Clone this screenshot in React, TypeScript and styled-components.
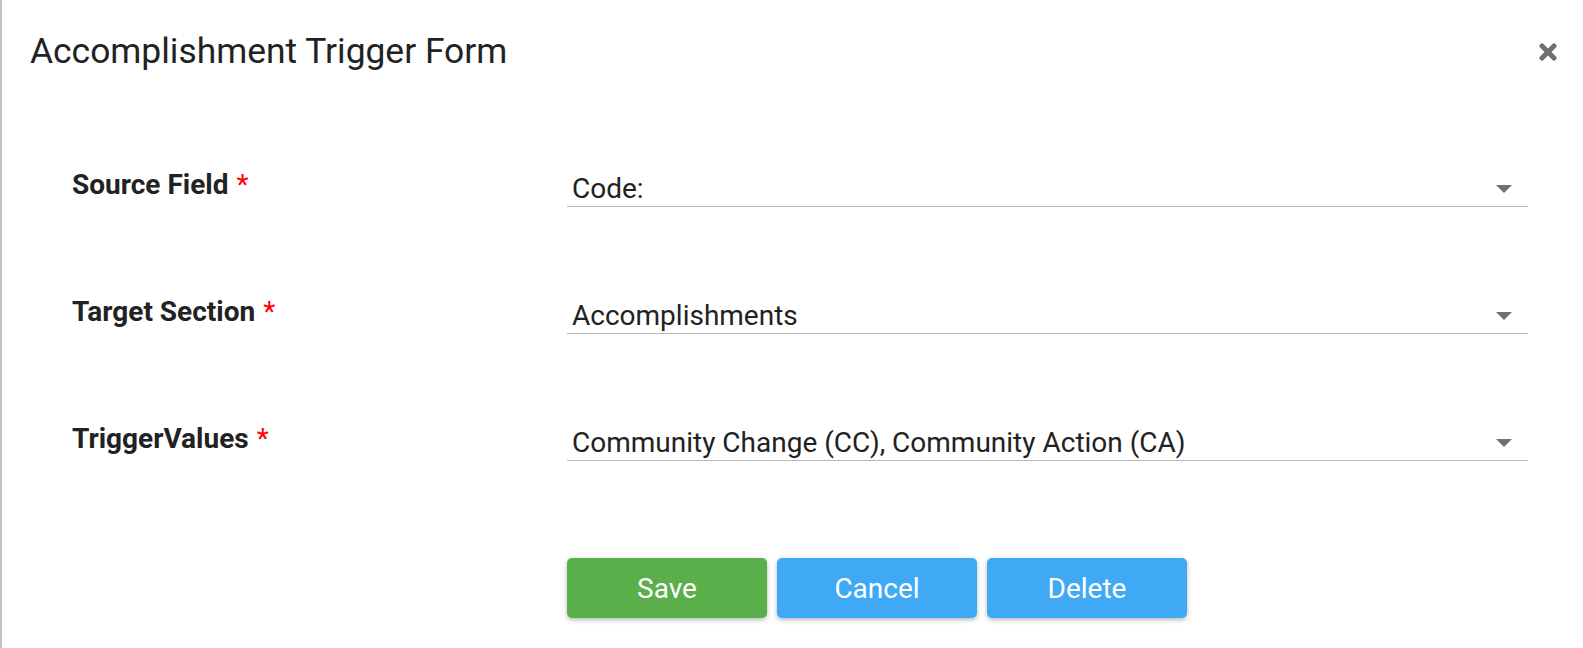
import React from "react";
import styled, { createGlobalStyle } from "styled-components";

const Global = createGlobalStyle`
  html, body { margin: 0; padding: 0; background: #ffffff; overflow: hidden; }
  body { font-family: Roboto, "Liberation Sans", Arial, sans-serif; }
  * { box-sizing: border-box; }
`;

const Modal = styled.div`
  width: 100%;
  height: 100vh;
  background: #ffffff;
  border-left: 2px solid #c4c4c4;
  display: flex;
  flex-direction: column;
`;

const Header = styled.div`
  display: flex;
  align-items: flex-start;
  justify-content: space-between;
  height: 141px;
  padding: 30px 26px 0 28px;
`;

const Title = styled.h1`
  margin: 0;
  font-family: Roboto, "Liberation Sans", sans-serif;
  font-weight: 400;
  font-size: 35.4px;
  line-height: 42px;
  color: #222222;
`;

const CloseButton = styled.button`
  margin-top: 13px;
  width: 18px;
  height: 18px;
  padding: 0;
  border: 0;
  background: transparent;
  display: flex;
  cursor: pointer;
`;

const Body = styled.div`
  display: flex;
  flex-direction: column;
  padding-left: 70px;
`;

const Row = styled.div`
  display: grid;
  grid-template-columns: 495px 961px;
  height: 127px;
  align-items: start;
`;

const Label = styled.label`
  margin-top: 28px;
  font-family: Roboto, "Liberation Sans", sans-serif;
  font-weight: 700;
  font-size: 28px;
  line-height: 32px;
  color: #222222;
`;

const Required = styled.span`
  color: #ff0000;
  font-weight: 400;
  margin-left: 8px;
`;

const Select = styled.div`
  margin-top: 32px;
  display: flex;
  align-items: center;
  justify-content: space-between;
  padding: 0 16px 1px 5px;
  border-bottom: 1.5px solid #b8b8b8;
  font-family: Roboto, "Liberation Sans", sans-serif;
  font-size: 28px;
  line-height: 32px;
  color: #222222;
`;

const Caret = styled.span`
  width: 0;
  height: 0;
  border-left: 8px solid transparent;
  border-right: 8px solid transparent;
  border-top: 8px solid #707070;
`;

const Actions = styled.div`
  display: grid;
  grid-template-columns: 495px auto;
  margin-top: 36px;
`;

const ButtonGroup = styled.div`
  display: flex;
  gap: 10px;
`;

const Button = styled.button<{ $variant: "save" | "info" }>`
  width: 200px;
  height: 60px;
  border: 0;
  border-radius: 5px;
  background: ${(p) => (p.$variant === "save" ? "#5baf4b" : "#3fa9f5")};
  color: #ffffff;
  font-family: Roboto, "Liberation Sans", sans-serif;
  font-size: 28px;
  font-weight: 400;
  box-shadow: 0 2px 5px rgba(0, 0, 0, 0.28);
  cursor: pointer;
`;

const fields = [
  { label: "Source Field", value: "Code:" },
  { label: "Target Section", value: "Accomplishments" },
  { label: "TriggerValues", value: "Community Change (CC), Community Action (CA)" },
];

export default function App() {
  return (
    <>
      <Global />
      <Modal>
        <Header>
          <Title>Accomplishment Trigger Form</Title>
          <CloseButton aria-label="Close">
            <svg width="18" height="18" viewBox="0 0 18 18">
              <path
                d="M3 3 L15 15 M15 3 L3 15"
                stroke="#707070"
                strokeWidth="5"
                strokeLinecap="round"
              />
            </svg>
          </CloseButton>
        </Header>
        <Body>
          {fields.map((f) => (
            <Row key={f.label}>
              <Label>
                {f.label}
                <Required>*</Required>
              </Label>
              <Select>
                <span>{f.value}</span>
                <Caret />
              </Select>
            </Row>
          ))}
          <Actions>
            <span />
            <ButtonGroup>
              <Button $variant="save">Save</Button>
              <Button $variant="info">Cancel</Button>
              <Button $variant="info">Delete</Button>
            </ButtonGroup>
          </Actions>
        </Body>
      </Modal>
    </>
  );
}
